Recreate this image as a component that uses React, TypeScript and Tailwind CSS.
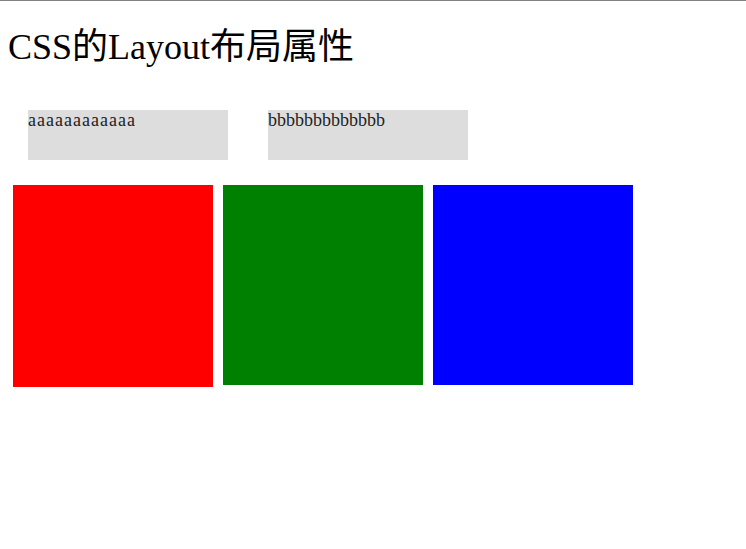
export default function App() {
  return (
    <div className="min-h-[549px] w-full bg-white border-t border-[#808080] px-2" style={{ fontFamily: '"Liberation Serif", "Noto Sans CJK SC", serif' }}>
      <h1 className="mt-[26px] text-[36px] leading-[40px] font-normal text-black">CSS的Layout布局属性</h1>
      <div className="mt-[43px] flex gap-[40px] pl-[20px]">
        <div className="w-[200px] h-[50px] bg-[#dddddd] text-[18px] leading-[20px] tracking-[1px] text-[#222]">aaaaaaaaaaaa</div>
        <div className="w-[200px] h-[50px] bg-[#dddddd] text-[18px] leading-[20px] text-[#222]">bbbbbbbbbbbbb</div>
      </div>
      <div className="mt-[25px] flex items-start gap-[10px] pl-[5px]">
        <div className="w-[200px] h-[202px] bg-[#ff0000]" />
        <div className="w-[200px] h-[200px] bg-[#008000]" />
        <div className="w-[200px] h-[200px] bg-[#0000ff]" />
      </div>
    </div>
  );
}
